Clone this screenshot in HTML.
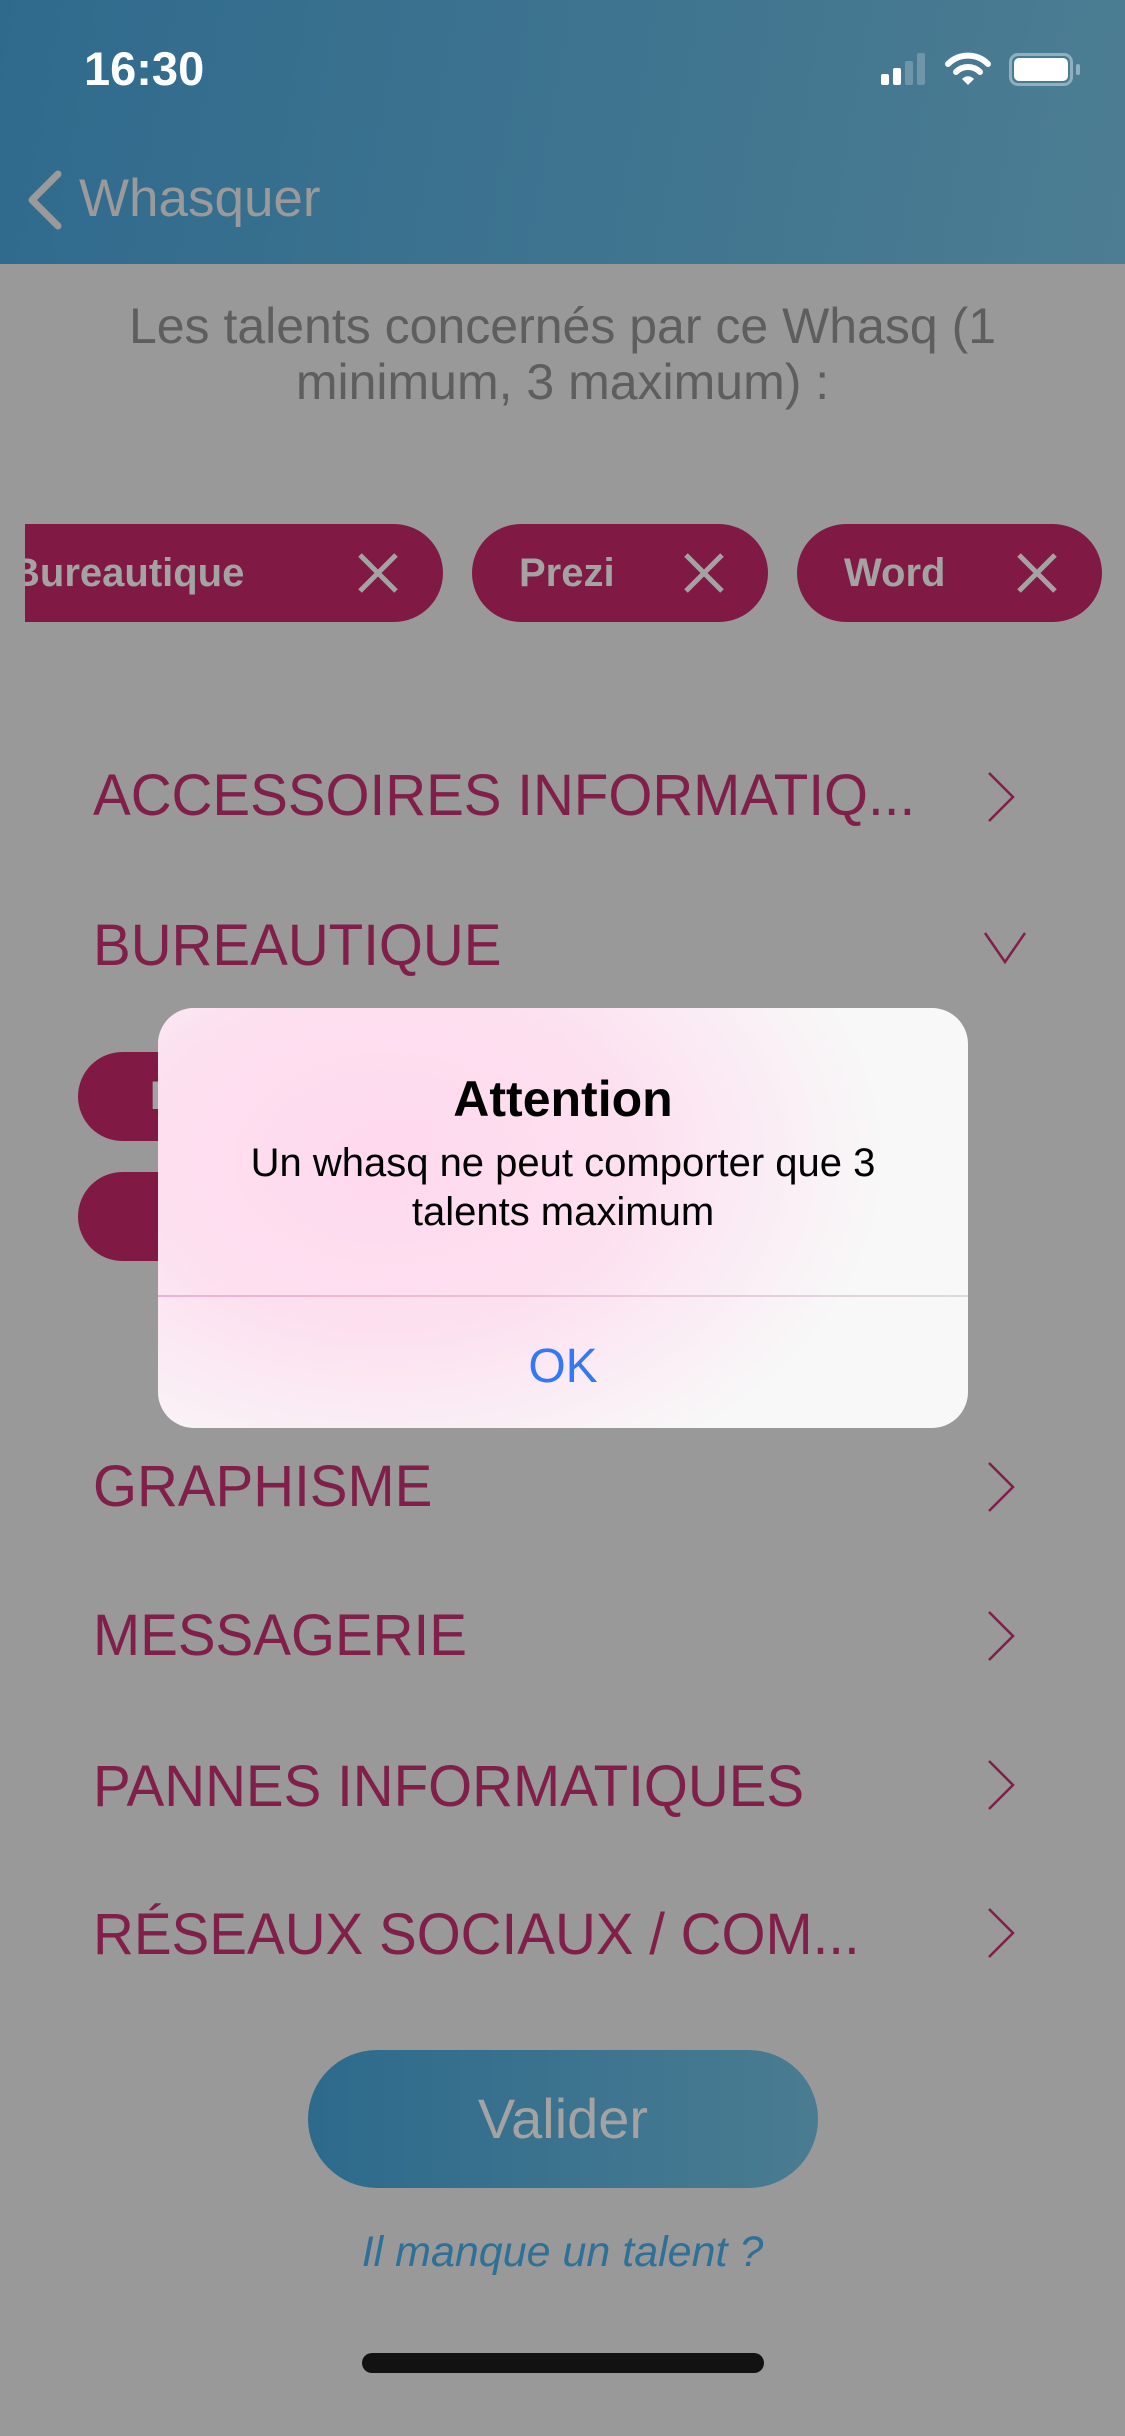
<!DOCTYPE html>
<html><head><meta charset="utf-8"><style>
*{margin:0;padding:0;box-sizing:border-box}
body{width:1125px;height:2436px;background:#999;position:relative;overflow:hidden;font-family:"Liberation Sans",sans-serif}
.abs{position:absolute}
.hdr{left:0;top:0;width:1125px;height:264px;background:linear-gradient(100deg,#2f6a8d,#4c7d92)}
.t{white-space:nowrap;display:inline-block;transform-origin:left center}
.chip{background:#801a45;border-radius:49px;height:98px;top:524px}
.ct{color:#a3a3a3;font-weight:bold;font-size:40px;top:27px}
.cat{left:93px;color:#80204a;font-size:58px;white-space:nowrap}
.cat span{display:inline-block;transform:scaleX(.975);transform-origin:left}
.chev{position:absolute;left:985px}
.sub{left:78px;width:260px;height:89px;background:#801a45;border-radius:45px}
</style></head><body>
<div class="abs hdr"></div>
<div class="abs" style="left:84px;top:41px;color:#fff;font-size:47px;font-weight:bold"><span class="t">16:30</span></div>
<div class="abs" style="left:881px;top:74px;width:8px;height:11px;background:#fff;border-radius:2px"></div>
<div class="abs" style="left:893px;top:68px;width:8px;height:17px;background:#fff;border-radius:2px"></div>
<div class="abs" style="left:905px;top:61px;width:8px;height:24px;background:#6f95a8;border-radius:2px"></div>
<div class="abs" style="left:917px;top:53px;width:8px;height:32px;background:#6f95a8;border-radius:2px"></div>
<svg class="abs" style="left:945px;top:52px" width="46" height="34" viewBox="0 0 46 34"><path d="M3 12 A28 28 0 0 1 43 12" stroke="#fff" stroke-width="6" fill="none" stroke-linecap="round"/><path d="M11 20 A17 17 0 0 1 35 20" stroke="#fff" stroke-width="6" fill="none" stroke-linecap="round"/><path d="M17 27 L23 33 L29 27 A8 8 0 0 0 17 27Z" fill="#fff"/></svg>
<div class="abs" style="left:1009px;top:53px;width:64px;height:33px;border:3px solid #8fb0c0;border-radius:9px"></div>
<div class="abs" style="left:1014px;top:58px;width:54px;height:23px;background:#fff;border-radius:5px"></div>
<div class="abs" style="left:1076px;top:64px;width:4px;height:11px;background:#8fb0c0;border-radius:2px"></div>
<svg class="abs" style="left:24px;top:168px" width="44" height="64" viewBox="0 0 44 64"><path d="M34 6 L8 32 L34 58" stroke="#9a9a9a" stroke-width="7" fill="none" stroke-linecap="round" stroke-linejoin="round"/></svg>
<div class="abs" style="left:79px;top:168px;color:#9a9a9a;font-size:53px"><span class="t">Whasquer</span></div>
<div class="abs" style="left:0;width:1125px;top:298px;text-align:center;color:#5e5e5e;font-size:50px;line-height:56px">Les talents concernés par ce Whasq (1<br>minimum, 3 maximum) :</div>
<div class="abs chip" style="left:25px;width:418px;border-radius:0 49px 49px 0;overflow:hidden"><div class="abs ct" style="left:-14px">Bureautique</div></div>
<div class="abs chip" style="left:472px;width:296px"><div class="abs ct" style="left:47px">Prezi</div></div>
<div class="abs chip" style="left:797px;width:305px"><div class="abs ct" style="left:47px">Word</div></div>
<svg class="abs" style="left:357px;top:552px" width="42" height="42"><path d="M3 3L39 39M39 3L3 39" stroke="#a3a3a3" stroke-width="5"/></svg>
<svg class="abs" style="left:683px;top:552px" width="42" height="42"><path d="M3 3L39 39M39 3L3 39" stroke="#a3a3a3" stroke-width="5"/></svg>
<svg class="abs" style="left:1016px;top:552px" width="42" height="42"><path d="M3 3L39 39M39 3L3 39" stroke="#a3a3a3" stroke-width="5"/></svg>
<div class="abs cat" style="top:762px"><span>ACCESSOIRES INFORMATIQ...</span></div>
<svg class="chev" style="top:770px" width="34" height="54"><path d="M4 3L28 27L4 51" stroke="#80204a" stroke-width="2.5" fill="none"/></svg>
<div class="abs cat" style="top:912px"><span>BUREAUTIQUE</span></div>
<svg class="chev" style="top:930px;left:982px" width="46" height="36"><path d="M3 3L23 32L43 3" stroke="#80204a" stroke-width="2.5" fill="none"/></svg>
<div class="abs sub" style="top:1052px"><div class="abs" style="left:72px;top:22px;color:#a3a3a3;font-weight:bold;font-size:40px">B</div></div>
<div class="abs sub" style="top:1172px"></div>
<div class="abs cat" style="top:1453px"><span>GRAPHISME</span></div>
<svg class="chev" style="top:1460px" width="34" height="54"><path d="M4 3L28 27L4 51" stroke="#80204a" stroke-width="2.5" fill="none"/></svg>
<div class="abs cat" style="top:1602px"><span>MESSAGERIE</span></div>
<svg class="chev" style="top:1609px" width="34" height="54"><path d="M4 3L28 27L4 51" stroke="#80204a" stroke-width="2.5" fill="none"/></svg>
<div class="abs cat" style="top:1753px"><span>PANNES INFORMATIQUES</span></div>
<svg class="chev" style="top:1758px" width="34" height="54"><path d="M4 3L28 27L4 51" stroke="#80204a" stroke-width="2.5" fill="none"/></svg>
<div class="abs cat" style="top:1901px"><span>RÉSEAUX SOCIAUX / COM...</span></div>
<svg class="chev" style="top:1906px" width="34" height="54"><path d="M4 3L28 27L4 51" stroke="#80204a" stroke-width="2.5" fill="none"/></svg>
<div class="abs" style="left:308px;top:2050px;width:510px;height:138px;border-radius:69px;background:linear-gradient(90deg,#2d6a8c,#4a7c91);color:#a3a3a3;font-size:56px;text-align:center;line-height:138px">Valider</div>
<div class="abs" style="left:0;width:1125px;top:2228px;text-align:center;color:#2f7097;font-size:43px;font-style:italic">Il manque un talent ?</div>
<div class="abs" style="left:362px;top:2353px;width:402px;height:20px;background:#121212;border-radius:10px"></div>
<div class="abs" style="left:158px;top:1008px;width:810px;height:420px;border-radius:36px;overflow:hidden;background:#f8f8f8">
<div class="abs" style="left:-300px;top:-250px;width:1100px;height:800px;background:radial-gradient(ellipse at 48% 50%,#ffd9ee 0%,#fde0f0 30%,rgba(248,248,248,0) 62%)"></div>
<div class="abs" style="left:0;top:287px;width:810px;height:2px;background:linear-gradient(90deg,#eeb0d2,#e8c8da 60%,#dcdcdc)"></div>
<div class="abs" style="left:0;width:810px;top:62px;text-align:center;font-weight:bold;font-size:50px;color:#000">Attention</div>
<div class="abs" style="left:0;width:810px;top:131px;text-align:center;font-size:40px;line-height:49px;color:#000">Un whasq ne peut comporter que 3<br>talents maximum</div>
<div class="abs" style="left:0;width:810px;top:331px;text-align:center;font-size:48px;color:#3478f6">OK</div>
</div>
</body></html>
